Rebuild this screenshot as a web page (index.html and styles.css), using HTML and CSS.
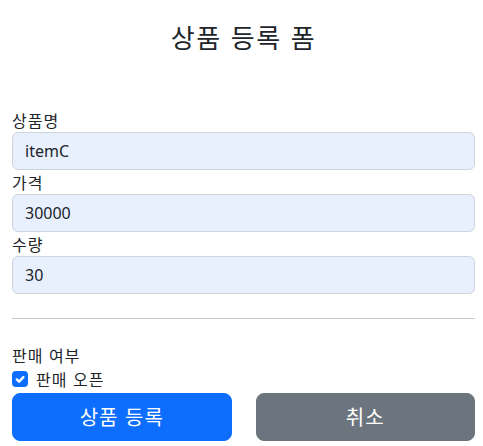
FILE: index.html
```html
<!DOCTYPE html>
<html lang="ko">
<head>
<meta charset="utf-8">
<title>상품 등록 폼</title>
<link rel="stylesheet" href="styles.css">
</head>
<body>
<div class="container">
  <div class="header">
    <h2 class="title">상품 등록 폼</h2>
  </div>
  <form class="form">
    <div class="field">
      <label class="label" for="itemName">상품명</label>
      <input class="input" type="text" id="itemName" value="itemC">
    </div>
    <div class="field">
      <label class="label" for="price">가격</label>
      <input class="input" type="text" id="price" value="30000">
    </div>
    <div class="field">
      <label class="label" for="quantity">수량</label>
      <input class="input" type="text" id="quantity" value="30">
    </div>
    <hr class="divider">
    <div class="section-label">판매 여부</div>
    <div class="check">
      <span class="check-box">
        <svg viewBox="0 0 20 20" width="16" height="16"><path d="M6 10.5l2.8 2.8l5.4-5.6" fill="none" stroke="#fff" stroke-width="3" stroke-linecap="round" stroke-linejoin="round"/></svg>
      </span>
      <label class="check-label">판매 오픈</label>
    </div>
    <div class="row">
      <div class="col"><button type="button" class="btn btn-primary">상품 등록</button></div>
      <div class="col"><button type="button" class="btn btn-secondary">취소</button></div>
    </div>
  </form>
</div>
</body>
</html>
```
FILE: styles.css
```css
* { box-sizing: border-box; }
html, body { margin: 0; padding: 0; background: #fff; }
body {
  font-family: "Noto Sans", "Noto Sans CJK KR", sans-serif;
  font-size: 16px;
  line-height: 1.5;
  color: #212529;
}
.container { padding: 0 8px 0 12px; }
.header { padding-top: 21px; height: 108px; text-align: center; }
.title {
  margin: 0;
  font-size: 26px;
  font-weight: 400;
  line-height: 1.2;
  letter-spacing: 1.6px;
  font-family: "Noto Sans CJK KR", sans-serif;
}
.form { margin: 0; }
.field { display: flex; flex-direction: column; }
.label, .section-label, .check-label {
  font-family: "Noto Sans CJK KR", sans-serif;
  letter-spacing: 1px;
  line-height: 24px;
}
.label { display: block; height: 24px; }
.input {
  display: block;
  width: 100%;
  height: 38px;
  padding: 6px 12px;
  font: inherit;
  font-size: 16px;
  line-height: 24px;
  color: #212529;
  background: #e8f0fe;
  border: 1px solid #ced4da;
  border-radius: 6px;
  outline: none;
}
.divider {
  margin: 24px 0;
  border: 0;
  border-top: 1px solid #c8c9ca;
  height: 0;
}
.section-label { height: 24px; }
.check {
  display: flex;
  align-items: center;
  gap: 8px;
  height: 24px;
  margin-bottom: 2px;
}
.check-box {
  width: 16px;
  height: 16px;
  border-radius: 4px;
  background: #0d6efd;
  display: flex;
  align-items: center;
  justify-content: center;
}
.check-box svg { display: block; }
.row { display: flex; gap: 24px; }
.col { flex: 1 1 0; min-width: 0; }
.btn {
  display: block;
  width: 100%;
  height: 48px;
  border: 1px solid transparent;
  border-radius: 8px;
  font-family: "Noto Sans CJK KR", sans-serif;
  font-size: 20px;
  line-height: 30px;
  letter-spacing: 1px;
  color: #fff;
  padding: 8px 16px;
  cursor: pointer;
}
.btn-primary { background: #0d6efd; border-color: #0d6efd; }
.btn-secondary { background: #6c757d; border-color: #6c757d; }
```
